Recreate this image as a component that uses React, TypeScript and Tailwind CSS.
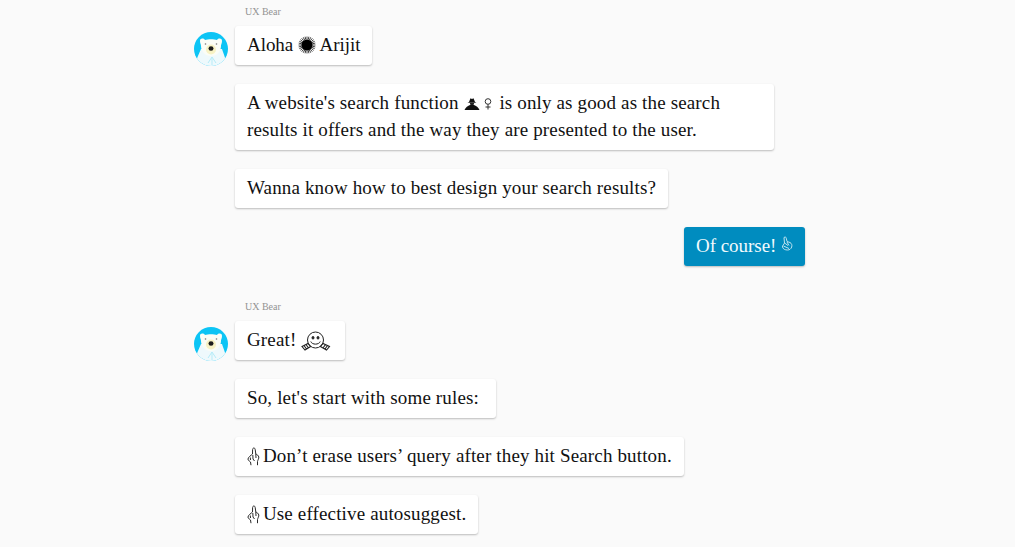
function Bear() {
  return (
    <svg width="34" height="34" viewBox="0 0 34 34" className="shrink-0 block">
      <defs>
        <clipPath id="c"><circle cx="17" cy="17" r="17" /></clipPath>
      </defs>
      <g clipPath="url(#c)">
        <rect width="34" height="34" fill="#0cc4f5" />
        <path d="M1 34 C2 27 5 22 7 17 L28 17 C30 23 32 27 33 34 Z" fill="#eef9fc" />
        <path d="M6 9 C6 6 9.5 6 11 8 C14 7 20 7 23 8 C24.5 6 28 6 28 9 C28 11 27 12.5 27 14 C27 19 23 24 17 24 C11 24 7 19 7 14 C7 12.5 6 11 6 9 Z" fill="#fbfdf6" />
        <ellipse cx="17" cy="17.5" rx="5" ry="5" fill="#f7f2c4" />
        <ellipse cx="17" cy="16.5" rx="2.5" ry="2.3" fill="#1d1d1d" />
        <circle cx="11.5" cy="12" r="0.8" fill="#777" />
        <circle cx="22.5" cy="12" r="0.8" fill="#777" />
        <path d="M14 31 L18 25 L22 31 M18 25 L18 33" stroke="#b5ebf7" strokeWidth="1" fill="none" />
      </g>
    </svg>
  );
}

function Sun() {
  const rays = Array.from({ length: 28 }, (_, i) => (i * 360) / 28);
  return (
    <svg width="18" height="18" viewBox="0 0 18 18" className="inline-block align-[-3px]">
      {rays.map((a) => (
        <line key={a} x1="9" y1="0.5" x2="9" y2="3.5" stroke="#222" strokeWidth="0.8" transform={`rotate(${a} 9 9)`} />
      ))}
      <circle cx="9" cy="9" r="5.6" fill="#000" />
    </svg>
  );
}

function Sleuth() {
  return (
    <svg width="16" height="12" viewBox="0 0 16 12" className="inline-block align-[-1px]">
      <path d="M5 4 L6.5 0.3 L8 0.9 L9.5 0.3 L11 4 L12.5 4.8 L3.5 4.8 Z" fill="#111" />
      <path d="M5.8 5 H10.2 L9.5 7 H6.5 Z" fill="#222" />
      <path d="M0.5 12 C1.5 9.5 4 7.5 6 7 L10 7 C12 7.5 14.5 9.5 15.5 12 Z" fill="#111" />
    </svg>
  );
}

function Female() {
  return (
    <svg width="8" height="12" viewBox="0 0 8 12" className="inline-block align-[-1px] mr-[2px]" fill="none" stroke="#333" strokeWidth="1">
      <circle cx="4" cy="3.5" r="2.8" />
      <path d="M4 6.3 V11.5 M1.5 9 H6.5" />
    </svg>
  );
}

function Cross() {
  return (
    <svg width="13" height="19" viewBox="0 0 13 19" className="inline-block align-[-4px] -mr-[2px]" fill="none" stroke="#2a2a2a" strokeWidth="1">
      <path d="M5.5 7 L5.6 2.5 C5.7 0.5 8 0.5 8.2 2.5 L8.8 7 C10 7.5 11.5 8.5 11.8 10 C12 11.5 10.8 13 10.5 14.5 L10.5 18.2" />
      <path d="M5.5 7 C4 8.5 1.2 10 1 12 C0.9 13.5 2.5 14 3.5 15 L4 18.2" />
      <path d="M8.8 7 L9 11 M5.8 8 L6 12 L7.5 14 M3.3 10.5 L3.5 13" />
    </svg>
  );
}

function CrossWhite() {
  return (
    <svg width="12" height="15" viewBox="0 0 12 15" className="inline-block align-[1px]" fill="none" stroke="#bfe3ef" strokeWidth="1">
      <path d="M3.5 1 C4.5 0.6 5.2 1.5 5.4 2.8 L6 5.5 L9 6.5 C10.7 7.5 11.2 9 10.7 11 C10 13 8.5 14 6.5 14 C4 14 2 13 1.5 11 C1.2 9.5 3 8.5 3.5 7 L3 2 Z M3.5 7 L7 9.5 M2.5 10 L8 12.5 M6 6 L8 9.5" />
    </svg>
  );
}

function Hug() {
  return (
    <svg width="30" height="20" viewBox="0 0 30 20" className="inline-block align-[-5px] mr-[2px]" fill="none" stroke="#222" strokeWidth="1">
      <circle cx="14.5" cy="9" r="8" />
      <ellipse cx="12" cy="6.8" rx="1" ry="1.3" fill="#222" />
      <ellipse cx="17" cy="6.8" rx="1" ry="1.3" fill="#222" />
      <path d="M9.8 10.5 C11 14 18 14 19.2 10.5" />
      <path d="M1 15.5 L7 12.5 L9.5 15.5 L4 19 Z M3 14.5 L5.5 18 M5 13.5 L7.5 17 M19.5 15.5 L22 12.5 L28.5 15.5 L25.5 19 Z M26.5 14.5 L24 18 M24.5 13.5 L22 17" strokeWidth="1.1" />
    </svg>
  );
}

function Bubble({ children, me = false, tight = false }: { children: React.ReactNode; me?: boolean; tight?: boolean }) {
  return (
    <div className={`rounded-[3px] px-3 pt-[5px] pb-[7px] text-[19px] leading-[27px] shadow-[0_1px_2px_rgba(0,0,0,0.25)] ${me ? "bg-[#008cbf] text-[#f2fafd]" : "bg-white text-[#111111]"} ${tight ? "tracking-[-0.05px]" : ""}`}>
      {children}
    </div>
  );
}

function Label({ children }: { children: React.ReactNode }) {
  return <div className="ml-[51px] h-[12px] text-[10px] leading-[12px] tracking-normal text-[#939393]">{children}</div>;
}

export default function App() {
  return (
    <div className="h-[547px] overflow-hidden bg-[#fafafa] pl-[194px] pr-[210px] pt-[6px] font-['Liberation_Serif',serif] tracking-[0.15px]">
      <Label>UX Bear</Label>
      <div className="mt-[8px] flex items-end gap-[7px]">
        <div className="-mb-px"><Bear /></div>
        <Bubble tight>Aloha <Sun /> Arijit</Bubble>
      </div>
      <div className="ml-[41px] mt-[19px] flex flex-col items-start gap-[19px]">
        <div className="w-[539px]">
          <Bubble>A website's search function <Sleuth /> <Female /> is only as good as the search results it offers and the way they are presented to the user.</Bubble>
        </div>
        <Bubble>Wanna know how to best design your search results?</Bubble>
      </div>
      <div className="mt-[19px] flex justify-end">
        <Bubble me tight>Of course! <CrossWhite /></Bubble>
      </div>
      <div className="mt-[35px]"><Label>UX Bear</Label></div>
      <div className="mt-[8px] flex items-end gap-[7px]">
        <div className="-mb-px"><Bear /></div>
        <Bubble>Great! <Hug /></Bubble>
      </div>
      <div className="ml-[41px] mt-[19px] flex flex-col items-start gap-[19px]">
        <Bubble>So, let's start with some rules:&nbsp;</Bubble>
        <Bubble><Cross /> Don’t erase users’ query after they hit Search button.</Bubble>
        <Bubble><Cross /> Use effective autosuggest.</Bubble>
      </div>
    </div>
  );
}
